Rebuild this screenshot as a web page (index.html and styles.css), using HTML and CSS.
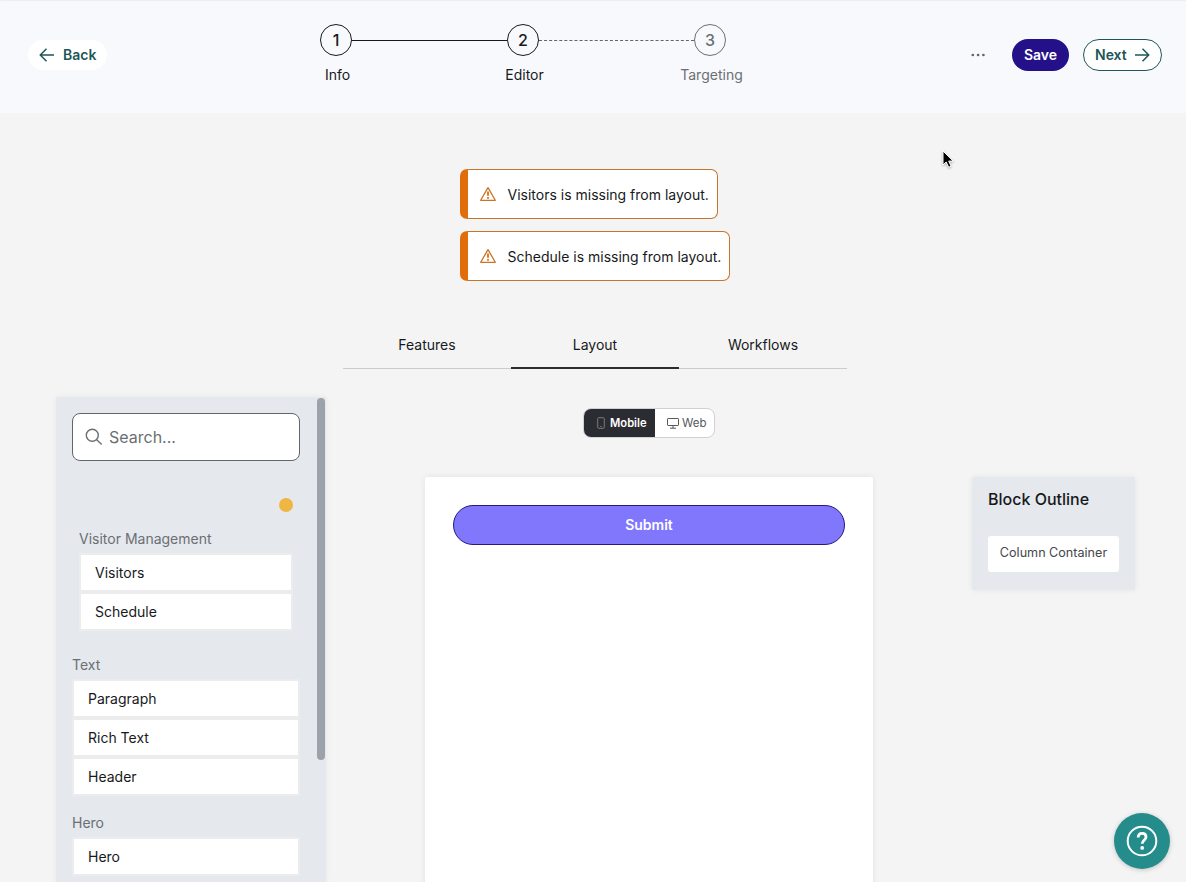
FILE: index.html
```html
<!doctype html>
<html lang="en">
  <head>
    <meta charset="UTF-8" />
    <meta name="viewport" content="width=device-width, initial-scale=1.0" />
    <title>Layout Editor</title>
    <link rel="stylesheet" href="styles.css">
  </head>
  <body>
    <header class="header">
      <button class="btn back-btn">
        <svg width="16" height="16" viewBox="0 0 16 16"><path d="M15 8H1.5M7.5 1.8L1.3 8l6.2 6.2" /></svg>
        Back
      </button>

      <ol class="steps">
        <li class="step done">
          <span class="step-number">1</span>
          <span class="step-label">Info</span>
        </li>
        <li class="step">
          <span class="step-number">2</span>
          <span class="step-label">Editor</span>
        </li>
        <li class="step upcoming">
          <span class="step-number">3</span>
          <span class="step-label">Targeting</span>
        </li>
      </ol>

      <div class="actions">
        <button class="more-btn" aria-label="More">
          <svg width="14" height="4" viewBox="0 0 14 4"><circle cx="1.8" cy="2" r="1.35" /><circle cx="7.1" cy="2" r="1.35" /><circle cx="12.4" cy="2" r="1.35" /></svg>
        </button>
        <button class="btn save-btn">Save</button>
        <button class="btn next-btn">
          Next
          <svg width="16" height="16" viewBox="0 0 16 16"><path d="M1 8h13.5M8.5 1.8L14.7 8l-6.2 6.2" /></svg>
        </button>
      </div>
    </header>

    <main>
      <div class="alerts">
        <div class="alert">
          <svg width="16" height="16" viewBox="0 0 16 16"><path d="M8 1.6L15.3 14.3H.7Z" /><path class="mark" d="M8 5.6v4.2M8 11v1.8" /></svg>
          Visitors is missing from layout.
        </div>
        <div class="alert">
          <svg width="16" height="16" viewBox="0 0 16 16"><path d="M8 1.6L15.3 14.3H.7Z" /><path class="mark" d="M8 5.6v4.2M8 11v1.8" /></svg>
          Schedule is missing from layout.
        </div>
      </div>

      <nav class="tabs">
        <a class="tab">Features</a>
        <a class="tab active">Layout</a>
        <a class="tab">Workflows</a>
      </nav>

      <div class="editor">
        <aside class="sidebar">
          <div class="sidebar-content">
            <div class="search">
              <svg width="18" height="18" viewBox="0 0 18 18"><circle cx="7.3" cy="7.3" r="6" /><path d="M11.7 11.7l5 4.8" /></svg>
              <span>Search...</span>
            </div>
            <span class="warning-dot"></span>

            <section class="group nested">
              <h3>Visitor Management</h3>
              <div class="block">Visitors</div>
              <div class="block">Schedule</div>
            </section>
            <section class="group">
              <h3>Text</h3>
              <div class="block">Paragraph</div>
              <div class="block">Rich Text</div>
              <div class="block">Header</div>
            </section>
            <section class="group">
              <h3>Hero</h3>
              <div class="block">Hero</div>
            </section>
          </div>
          <div class="scroll-thumb"></div>
        </aside>

        <section class="preview">
          <div class="device-toggle">
            <button class="device selected">
              <svg class="phone" width="8" height="12" viewBox="0 0 8 12"><rect x=".7" y=".7" width="6.6" height="10.6" rx="1" /><path d="M3.3 9.5h1.4" /></svg>
              Mobile
            </button>
            <button class="device">
              <svg width="12" height="12" viewBox="0 0 12 12"><rect x=".5" y="1.5" width="11" height="7" rx=".6" /><path d="M6 8.5v2.7M3 11.2h6" /></svg>
              Web
            </button>
          </div>
          <div class="canvas">
            <button class="submit-btn">Submit</button>
          </div>
        </section>

        <aside class="outline">
          <h2>Block Outline</h2>
          <div class="outline-item">Column Container</div>
        </aside>
      </div>
    </main>

    <button class="help-btn" aria-label="Help">
      <svg width="32" height="32" viewBox="0 0 32 32"><circle cx="16" cy="16" r="14.3" /><path d="M12.2 12.5c0-2.7 1.6-4.2 3.9-4.2s3.9 1.5 3.9 3.7c0 3.3-3.8 3.2-3.8 6.8" /><circle class="dot" cx="16.2" cy="22.9" r="1.9" /></svg>
    </button>

    <svg class="cursor" width="14" height="20" viewBox="0 0 14 20"><path d="M1 1v14l3.2-3 2.5 5.3 2.4-1.1-2.4-5.1h4.5Z" /></svg>
  </body>
</html>
```
FILE: styles.css
```css
* {
  margin: 0;
  padding: 0;
  box-sizing: border-box;
}

body {
  height: 100vh;
  overflow: hidden;
  font-family: Inter, 'Liberation Sans', sans-serif;
  font-size: 14px;
  line-height: 20px;
  color: #17191c;
  background: #f4f4f4;
}

button {
  font: inherit;
  border: none;
  background: none;
  cursor: pointer;
}

svg {
  flex-shrink: 0;
  fill: none;
  stroke: currentColor;
}

/* Header */
.header {
  display: flex;
  align-items: flex-start;
  height: 113px;
  padding: 0 24px 0 28px;
  background: #f8f9fc;
  box-shadow: inset 0 1px 1px #eceef0;
}

.btn {
  display: flex;
  align-items: center;
  height: 32px;
  border-radius: 16px;
  font-weight: 600;
}

.btn svg {
  stroke-width: 1.5;
}

.back-btn {
  width: 79px;
  height: 30px;
  margin-top: 40px;
  padding-left: 11px;
  gap: 8px;
  background: #fff;
  color: #1d5757;
}

.steps {
  display: flex;
  margin: 24px 0 0 213px;
  list-style: none;
}

.step {
  display: grid;
  grid-template-columns: 32px 155px;
  row-gap: 9px;
  align-items: center;
}

.step::after {
  content: '';
  grid-area: 1 / 2;
  margin-top: 1px;
  border-top: 1px dashed #62666a;
}

.step.done::after {
  border-top: 1px solid #17191c;
}

.step.upcoming {
  grid-template-columns: 32px;
  color: #6b6f73;
}

.step.upcoming::after {
  display: none;
}

.step-number {
  display: flex;
  align-items: center;
  justify-content: center;
  height: 32px;
  border: 1px solid currentColor;
  border-radius: 50%;
  font-size: 16px;
  font-weight: 500;
}

.step-label {
  display: flex;
  justify-content: center;
  width: 35px;
  grid-row: 2;
}

.actions {
  display: flex;
  align-items: center;
  margin: 39px 0 0 auto;
}

.more-btn {
  display: flex;
  margin-right: 27px;
  color: #62666a;
}

.more-btn svg {
  fill: currentColor;
  stroke: none;
}

.save-btn {
  width: 57px;
  margin-right: 14px;
  justify-content: center;
  background: #24118a;
  color: #fff;
}

.next-btn {
  width: 79px;
  padding-left: 11px;
  gap: 7px;
  border: 1px solid #1d5757;
  background: #fff;
  color: #1d5757;
}

/* Alerts */
.alerts {
  display: flex;
  flex-direction: column;
  align-items: flex-start;
  gap: 12px;
  margin: 56px 0 0 460px;
}

.alert {
  display: flex;
  align-items: center;
  gap: 11.5px;
  height: 50px;
  padding: 2px 8px 0 12px;
  border: 1px solid #c4762a;
  border-left: 8px solid #e06c0a;
  border-radius: 7px;
  background: #fff;
}

.alert svg {
  margin-bottom: 2px;
  stroke: #c9732b;
  stroke-width: 1.3;
  stroke-linejoin: round;
}

.alert .mark {
  stroke: #e06c0a;
  stroke-width: 1.8;
}

/* Tabs */
.tabs {
  display: flex;
  width: 504px;
  height: 48px;
  margin: 40px 0 0 343px;
  border-bottom: 1px solid #c9cbcd;
}

.tab {
  flex: 1;
  height: 48px;
  padding-top: 14px;
  text-align: center;
}

.tab.active {
  border-bottom: 2px solid #2b2c31;
}

/* Editor */
.editor {
  display: flex;
  align-items: flex-start;
  margin: 28px 0 0 56px;
}

.sidebar {
  display: flex;
  justify-content: space-between;
  align-items: flex-start;
  width: 270px;
  height: 485px;
  padding: 1px 1px 0 16px;
  overflow: hidden;
  background: #e5e8ed;
  box-shadow: 0 0 6px rgba(0, 0, 0, 0.06);
}

.sidebar-content {
  display: flex;
  flex-direction: column;
  width: 228px;
  padding-top: 15px;
}

.search {
  display: flex;
  align-items: center;
  gap: 6px;
  height: 48px;
  padding-left: 12px;
  border: 1px solid #62666c;
  border-radius: 8px;
  background: #fff;
  color: #6b6f73;
  font-size: 16px;
}

.search svg {
  stroke-width: 1.4;
}

.warning-dot {
  width: 14px;
  height: 14px;
  margin: 37px 7px 0 0;
  align-self: flex-end;
  border-radius: 50%;
  background: #efb643;
}

.group {
  margin-bottom: 13px;
}

.group.nested {
  margin: 13px 7px 20px;
}

.group h3 {
  height: 28px;
  color: #6b6f73;
  font-size: 14px;
  font-weight: 400;
  line-height: 28px;
}

.block {
  height: 39px;
  padding-left: 14px;
  border: 2px solid #ececef;
  background: #fff;
  line-height: 36px;
}

.scroll-thumb {
  width: 8px;
  height: 362px;
  border-radius: 4px;
  background: #9da1aa;
}

.preview {
  width: 448px;
  margin: 11px 0 0 99px;
}

.device-toggle {
  display: flex;
  width: 132px;
  height: 30px;
  margin: 0 0 39px 158px;
  overflow: hidden;
  border: 1px solid #cfd1d4;
  border-radius: 8px;
  background: #fff;
}

.device {
  display: flex;
  align-items: center;
  gap: 3px;
  padding: 0 0 1px 12px;
  color: #56595e;
  font-size: 11.5px;
}

.device.selected {
  width: 72px;
  margin: -1px 0 -1px -1px;
  padding-left: 14px;
  gap: 5px;
  background: #2b2c31;
  color: #fff;
  font-size: 11.2px;
  font-weight: 600;
}

.device .phone {
  color: #777a80;
}

.canvas {
  height: 420px;
  padding: 28px;
  border-radius: 2px;
  background: #fff;
  box-shadow: 0 0 6px rgba(0, 0, 0, 0.08);
}

.submit-btn {
  width: 100%;
  height: 40px;
  border: 1px solid #251a80;
  border-radius: 20px;
  background: #8077fc;
  color: #fff;
  font-weight: 600;
}

.outline {
  width: 163px;
  height: 113px;
  margin: 80px 0 0 99px;
  padding: 12px 16px;
  border-radius: 2px;
  background: #e5e8ed;
  box-shadow: 0 0 6px rgba(0, 0, 0, 0.07);
}

.outline h2 {
  margin-bottom: 27px;
  font-size: 16px;
  font-weight: 500;
  line-height: 20px;
}

.outline-item {
  height: 36px;
  border-radius: 3px;
  background: #fff;
  color: #44474b;
  font-size: 12.6px;
  line-height: 33px;
  text-align: center;
  white-space: nowrap;
}

/* Floating help button */
.help-btn {
  position: fixed;
  right: 16px;
  bottom: 13px;
  display: flex;
  align-items: center;
  justify-content: center;
  width: 56px;
  height: 56px;
  border-radius: 50%;
  background: #248c8b;
  color: #fff;
  box-shadow: 0 1px 5px rgba(0, 0, 0, 0.2);
}

.help-btn svg {
  stroke-width: 2;
}

.help-btn path {
  stroke-width: 2.8;
}

.help-btn .dot {
  fill: currentColor;
  stroke: none;
}

.cursor {
  position: absolute;
  left: 942px;
  top: 150px;
  fill: #000;
  stroke: #fff;
  filter: drop-shadow(0 1px 1px rgba(0, 0, 0, 0.3));
}
```
